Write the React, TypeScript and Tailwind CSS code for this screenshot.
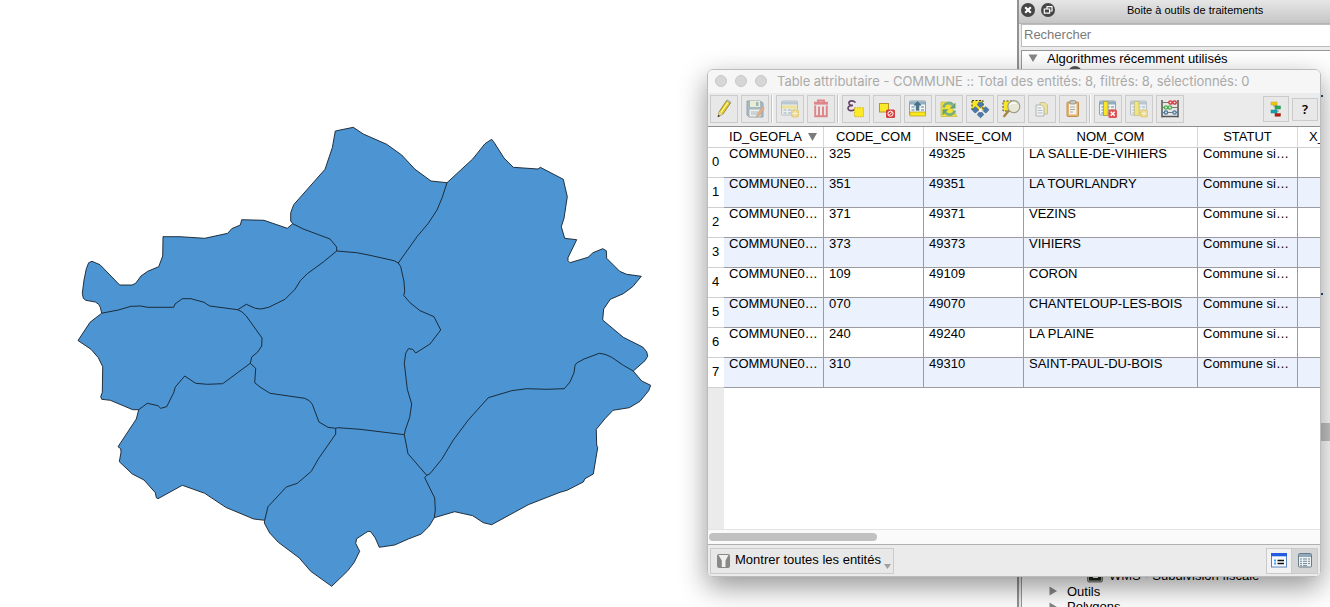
import React from "react";

const OUTLINE =
  "101.7,313.2 100.3,307.3 98.7,304.3 95.3,302 85.7,300.3 83.3,298.3 82.3,293.3 84,280 86.3,268.7 88.7,262.7 92,261.3 100,264.7 119.7,285 132,285 135.7,283.3 141,276 147.7,271.3 158.7,266.7 162.7,256 163,236.7 180,236.7 204.7,238.3 227.7,233.3 231.7,228.7 240.3,225 241.7,219.7 264,220.3 287.3,228.3 292.7,223.7 290.7,221 290.7,212.7 293.7,204.7 325,169.3 332.3,147.7 335.3,131 353.3,127.3 363.3,134 386.7,144.3 401.7,155 415,169.3 431,181 447,182.7 472.7,159 485,143.7 491.7,139.3 494.3,142.7 504,158 513.3,167.3 538,169 540.3,167.3 563.3,179.3 567.3,196.7 564,218.3 561.3,226.7 564.7,238.3 576.7,239.7 568,257.7 568,260.7 570,262.7 588,257.3 593,252.7 602.7,248.7 606.3,250.7 606.7,258.3 619.7,271.3 626.7,274.3 641.3,276.3 632.7,286.7 623.3,293.7 610.3,299.3 603.7,309 602.7,320 623.3,337.3 642.7,347 646.7,351.7 647.7,356.3 645,360.7 633.3,371 641.7,381 650.7,385.3 648.7,390.7 640,401.3 629.3,407.7 613,410.3 605,418.7 596.3,429.3 596.7,445 597.7,447.7 593.3,474 585,478.7 583.3,482 567,490.3 560,492.3 528.3,504.7 491.7,524.7 483.3,522.7 472.7,515.7 454.7,511.7 434.3,517.7 429.3,526 421.3,534 408.3,539 394.7,545 379.3,547.3 375.3,538 370.7,531.7 368,531.3 356.7,538.7 355.7,543.3 359.7,551.3 354,562.7 347.3,571.3 331.7,586.3 310.7,571.3 299.3,558 278.3,542.3 269.7,533 264.3,523 264.7,520.3 253.7,519 225.7,507.3 204.7,493.3 182.3,485.3 158,498.7 156.3,497.7 155.3,492.7 144,480 132.3,474 119.3,461.7 121,452.3 120.7,448.7 118,446.7 136.3,419 138.7,409.7 132.7,409.7 110.3,400.3 101.7,399.3 100.7,396.7 102.3,392.3 102.7,366.7 98.3,357.7 91,349.3 78,340.5 90,322.3";

const BORDERS = [
  "101.7,313.2 118.3,310 131,306.3 140.7,306 147.7,307.3 173.7,307.3 175,304 182.3,298.7 191,298.7 204,302.3 209.7,306 237.7,309.7 246.3,304.3 255.3,308.3 261,309 268.7,307.3 285,299.3 295,289.3 300.3,280.7 307.3,273.7 323.3,262 336.7,251",
  "292.7,223.7 303.3,229 330,239 336.7,247 336.7,251 356.7,252.7 370,255.3 394,260.7 398.3,263",
  "447,182.7 442.3,197.3 437,210 428.3,223.3 417.3,236.3 398.3,263 400.7,266.7 404,281.7 404.7,291.7 403.7,295.3 410,302.7 420,310.7 434,316.7 440.7,330 430,344 415.7,353 412.7,349.3 408.3,348.7 405.7,353.3 404.3,363.3 407.3,389.3 411.7,404 409.7,417.3 405.3,430 404.3,434.7 408,453.7 426.7,475.3",
  "633.3,371 623.3,365.3 611.7,357.3 605,354.3 599.3,353.3 584,359 576.7,363 575,365.3 574,372.7 570,382 564.3,388.7 546.7,389.3 526.7,388.7 511.7,390.7 488.3,397.7 468.3,420 453.3,440 441.7,459.3 430,473.7 426.7,475.3 424.7,477.7 434.7,498 435.3,510 434.3,517.7",
  "404.3,434.7 360,429.3 337.7,427.7 335.7,428.3 328,427.3 319,422 312.3,404.3 309.3,400.7 304.7,398.3 270,393.3 260,387 254.7,382.7 255.7,368.3 250.3,363.3 251.7,357 257.7,352 261.7,346 262,338 246.3,316 241.7,311.7 237.7,309.7",
  "250.3,363.3 222.7,383.7 207.3,384.3 195.7,383.3 184.7,376 175.3,387 173.7,392.7 166.7,406.7 160.7,408.3 158,405.7 147.3,403.3 138.7,409.7",
  "335.7,428.3 335.7,434 318.3,459 311.3,471.3 297.3,483.3 286.3,487 268,506.7 264.7,520.3",
];

function MapCanvas() {
  return (
    <svg width="1017" height="607" viewBox="0 0 1017 607" className="block h-[607px] w-[1017px] shrink-0 bg-white">
      <g stroke="#14202b" strokeWidth="0.9" strokeLinejoin="round" fill="none">
        <polygon points={OUTLINE} fill="#4c94d2" />
        {BORDERS.map((p) => (
          <polyline key={p} points={p} />
        ))}
      </g>
    </svg>
  );
}

function Triangle({ down = false }: { down?: boolean }) {
  return (
    <svg width="10" height="10" viewBox="0 0 10 10" className="shrink-0">
      <path d={down ? "M0.5 1.5H9.5L5 9Z" : "M1.5 0.5V9.5L9 5Z"} fill="#868686" />
    </svg>
  );
}

function ToolboxPanel() {
  return (
    <div className="flex min-w-0 flex-1 flex-col border-l-2 border-[#929292] bg-[#ececec]">
      <div className="flex h-6 shrink-0 items-center border-b border-[#b4b4b4] bg-linear-to-b from-[#e6e6e6] to-[#c6c6c6] pb-[3px] pl-[2px]">
        <svg width="34" height="14" viewBox="0 0 34 14" className="shrink-0">
          <circle cx="7" cy="7" r="7" fill="#464646" />
          <path d="M4.2 4.2L9.8 9.8M9.8 4.2L4.2 9.8" stroke="#fff" strokeWidth="2.2" />
          <circle cx="27" cy="7" r="7" fill="#464646" />
          <path d="M26 5.5V3.6H31V8H29.3M23.3 6H28.6V10.2H23.3Z" stroke="#fff" strokeWidth="1.2" fill="none" />
        </svg>
        <span className="ml-[72px] whitespace-nowrap pt-px text-[11px] leading-none tracking-[0.02px]">Boite à outils de traitements</span>
      </div>
      <div className="ml-[2px] flex h-[23px] shrink-0 items-center border border-r-0 border-[#bdbdbd] bg-white pb-[2px] pl-[2px] text-[13px] leading-none text-[#7b7b7b]">
        Rechercher
      </div>
      <div className="relative ml-[2px] mt-[3px] flex min-h-0 flex-1 flex-col overflow-hidden border-l border-t border-[#979797] bg-white text-[13px] leading-none">
        <div className="flex h-[14px] shrink-0 items-center gap-[9px] pl-[6px]">
          <Triangle down />
          <span className="whitespace-nowrap">Algorithmes récemment utilisés</span>
        </div>
        <div className="flex h-4 shrink-0 items-center pl-[46px]">
          <span className="mr-2 h-[14px] w-[14px] rounded-full bg-[#555]" />
          <span>Ville</span>
        </div>
        <div className="h-[486px] shrink-0" />
        <div className="flex h-4 shrink-0 items-center pl-[65px]">
          <svg width="16" height="16" viewBox="0 0 16 16" className="mr-[6px] shrink-0">
            <rect x="0.5" y="0.5" width="15" height="14.5" rx="1.5" fill="#a7a7a7" stroke="#777" />
            <rect x="2" y="2" width="12" height="11.5" fill="#1c2818" />
            <path d="M6 10.5h5" stroke="#fff" />
          </svg>
          <span className="whitespace-nowrap">WMS - Subdivision fiscale</span>
        </div>
        <div className="flex h-4 shrink-0 items-center gap-[9px] pl-[26px]">
          <Triangle />
          <span>Outils</span>
        </div>
        <div className="flex h-[15px] shrink-0 items-center gap-[9px] pl-[26px]">
          <Triangle />
          <span>Polygons</span>
        </div>
        <div className="absolute right-0 top-[372px] h-[18px] w-[10px] bg-[#c6c6c6]" />
        <div className="absolute right-[7px] top-[44px] h-[2px] w-[2px] bg-[#1d4f80]" />
        <div className="absolute right-[7px] top-[242px] h-[2px] w-[2px] bg-[#1d4f80]" />
      </div>
    </div>
  );
}

const Icon = ({ children, dim = false }: { children: React.ReactNode; dim?: boolean }) => (
  <svg width="20" height="20" viewBox="0 0 20 20" className={dim ? "block opacity-55" : "block"}>
    {children}
  </svg>
);

const Sheet = () => (
  <>
    <rect x="1.5" y="2" width="16" height="14" rx="1" fill="#f1f5f6" stroke="#8ea3b1" />
    <rect x="2" y="2.5" width="15" height="3" fill="#91adc1" />
    <path d="M3.5 8h3M8 8h3.5M13 8h3M3.5 11h3M8 11h3.5M13 11h3M3.5 14h3M8 14h3.5" stroke="#5f8093" strokeWidth="1.1" />
  </>
);

const Spark = () => (
  <>
    <rect x="11" y="10.5" width="8" height="8" rx="2" fill="#e3ba28" />
    <path d="M15 11.5v6M12 14.5h6M13 12.5l4 4M17 12.5l-4 4" stroke="#fff7b8" />
  </>
);

const PencilIcon = () => (
  <Icon>
    <path d="M4 17.5L5.3 12.5L12.7 1.5L16.5 4L9 15Z" fill="#e6cc25" stroke="#85782b" strokeWidth="0.8" />
    <path d="M6.9 13.5L14.3 2.8" stroke="#fff6a0" strokeWidth="1.3" />
    <path d="M12.3 2L13.2 0.9L17 3.2L16.3 4.4Z" fill="#c6c9bc" stroke="#8d8d78" strokeWidth="0.5" />
    <path d="M4 17.5L5.3 12.8L8.9 15Z" fill="#e5d7aa" />
    <path d="M3.6 18.2L4.3 15.7L6.2 16.9Z" fill="#333" />
  </Icon>
);

const SaveIcon = () => (
  <Icon dim>
    <path d="M2 2H15L18 4V18H4L2 16Z" fill="#7192a8" stroke="#517085" />
    <rect x="5" y="2" width="10" height="6" fill="#edf2c0" />
    <rect x="11" y="3" width="2.5" height="4" fill="#6c8899" />
    <rect x="4.5" y="10.5" width="11" height="7" fill="#f4f4ea" />
    <path d="M6 13h7M6 15h6" stroke="#75919f" />
    <path d="M11.5 18L12.4 15L17.3 7.8L19.3 9.2L14.3 16.5Z" fill="#e58b3e" stroke="#a65b29" strokeWidth="0.7" />
  </Icon>
);

const AddRowIcon = () => (
  <Icon dim>
    <Sheet />
    <rect x="2" y="6.5" width="15" height="3" fill="#f4dd58" />
    <Spark />
  </Icon>
);

const TrashIcon = () => (
  <Icon dim>
    <g fill="none" stroke="#d5353b" strokeWidth="1.9">
      <path d="M7 3V1.5H13V3" />
      <path d="M3 4.2H17" strokeWidth="2.8" />
      <path d="M4.2 6.5V17.3H15.8V6.5M8 7.5v9M12 7.5v9" />
    </g>
  </Icon>
);

const ExprIcon = () => (
  <Icon>
    <path d="M9.2 3.8C8.4 1.2 2.9 1.1 2.9 4.1C2.9 6.1 5.1 6.4 7 6.4C4.3 6.4 2 7.1 2 9.3C2 12.4 8 12.4 9.3 9.5" stroke="#65416c" strokeWidth="1.6" fill="none" />
    <rect x="8.5" y="8.7" width="9" height="9" fill="#fce927" stroke="#d2b51b" strokeDasharray="1.5 1" />
  </Icon>
);

const DeselectIcon = () => (
  <Icon>
    <rect x="2.5" y="4.5" width="9" height="8.5" fill="#fce927" stroke="#b8942d" />
    <rect x="9" y="10.5" width="9" height="8.5" rx="1.5" fill="#d83b40" />
    <circle cx="13.5" cy="14.7" r="2.6" fill="none" stroke="#fff" />
    <path d="M11.8 16.5L15.3 13" stroke="#fff" />
  </Icon>
);

const MoveTopIcon = () => (
  <Icon>
    <Sheet />
    <rect x="2" y="13" width="15.5" height="4" fill="#fbe71d" stroke="#b49c1d" strokeWidth="0.7" />
    <path d="M9.5 2.5L13 6.2H10.8V11H8.2V6.2H6Z" fill="#47758e" stroke="#31586b" strokeWidth="0.5" />
  </Icon>
);

const InvertIcon = () => (
  <Icon>
    <path d="M2 3H9L18 17.5H2Z" fill="#f5e32c" stroke="#c5b43f" strokeWidth="0.7" />
    <path d="M4.5 8.5C5.5 4 11 2.5 14 6" stroke="#7cae86" strokeWidth="2.8" fill="none" />
    <path d="M16.5 3.5V9.5H10.5Z" fill="#67a074" />
    <path d="M15.8 11.5C14.8 16 9 17 6.2 13.7" stroke="#7cae86" strokeWidth="2.8" fill="none" />
    <path d="M3.5 16.5V10.2H9.7Z" fill="#67a074" />
  </Icon>
);

const PanIcon = () => (
  <Icon>
    <rect x="2" y="1.5" width="11" height="9.5" fill="#f8e428" stroke="#39351b" strokeDasharray="2 1.5" />
    <g fill="#4c78ab" stroke="#35628e" strokeWidth="0.6">
      <path d="M10.5 8.8L7.3 5.8L8.8 3.2H12.2L13.7 5.8Z" />
      <path d="M10.5 18.8L7.3 15.8L8.8 13.6H12.2L13.7 15.8Z" />
      <path d="M2 10.8L5 7.7L7.3 9.2V12.5L5 14Z" />
      <path d="M19 10.8L16 7.7L13.7 9.2V12.5L16 14Z" />
    </g>
    <circle cx="10.5" cy="11" r="1.5" fill="#fff" />
  </Icon>
);

const ZoomIcon = () => (
  <Icon>
    <rect x="2" y="2" width="11" height="10" fill="#f8e428" stroke="#514b22" strokeDasharray="2 1.5" />
    <path d="M7.5 12L3.3 17" stroke="#a6853e" strokeWidth="2.4" strokeLinecap="round" />
    <circle cx="12.8" cy="7.6" r="6" fill="#e8e8d5" stroke="#9b9b8e" strokeWidth="1.2" />
    <path d="M9 6C10 3.7 13 3.3 15 4.5" stroke="#fff" strokeWidth="1.4" fill="none" />
  </Icon>
);

const CopyIcon = () => (
  <Icon dim>
    <path d="M8 3.5H13L15.5 6V15H8Z" fill="#f1df58" stroke="#aaa26b" />
    <path d="M4 6H9.5L12 8.5V17H4Z" fill="#fff" stroke="#838d8d" />
    <path d="M5.5 9h4M5.5 11.5h5M5.5 14h5" stroke="#82989c" />
  </Icon>
);

const PasteIcon = () => (
  <Icon>
    <rect x="4" y="3" width="11.5" height="14.5" rx="1" fill="#e4b46e" stroke="#c09050" />
    <rect x="6" y="5" width="7.5" height="10.5" fill="#f4f2ec" />
    <rect x="7" y="1.5" width="5.5" height="3.5" rx="1" fill="#c5c5c5" stroke="#8e8e8e" strokeWidth="0.8" />
    <path d="M7 8h5M7 10.5h5M7 13h3" stroke="#aaa" />
  </Icon>
);

const DeleteColIcon = () => (
  <Icon>
    <Sheet />
    <rect x="5.5" y="2.5" width="4.5" height="14" fill="#f8e52a" stroke="#a99833" strokeWidth="0.7" />
    <rect x="10.5" y="10.5" width="8.5" height="8.5" rx="1.5" fill="#df5055" />
    <path d="M12.7 12.7l4 4M16.7 12.7l-4 4" stroke="#fff" strokeWidth="1.5" />
  </Icon>
);

const AddColIcon = () => (
  <Icon dim>
    <Sheet />
    <rect x="5.5" y="2.5" width="4.5" height="14" fill="#f8e52a" stroke="#a99833" strokeWidth="0.7" />
    <Spark />
  </Icon>
);

const AbacusIcon = () => (
  <Icon>
    <path d="M2 1V18.5M18 1V18.5M1.5 17.5H18.5" stroke="#555" strokeWidth="1.5" />
    <path d="M2 3.5H18M2 8.5H18M2 13.5H18" stroke="#777" />
    <g fill="#f7d1d3" stroke="#cf3439" strokeWidth="1.3"><circle cx="10.5" cy="3.5" r="1.7" /><circle cx="14.5" cy="3.5" r="1.7" /></g>
    <g fill="#cdebc9" stroke="#54ad57" strokeWidth="1.3"><circle cx="6" cy="8.5" r="1.7" /><circle cx="10" cy="8.5" r="1.7" /></g>
    <g fill="#c8dceb" stroke="#49799f" strokeWidth="1.3"><circle cx="6" cy="13.5" r="1.7" /><circle cx="14.5" cy="13.5" r="1.7" /></g>
  </Icon>
);

const DockIcon = () => (
  <Icon>
    <path d="M10 6V15M7 7H12M8 12H13" stroke="#777" strokeWidth="0.8" />
    <rect x="5" y="3" width="6" height="3" fill="#f1c800" stroke="#bea31c" strokeWidth="0.5" />
    <rect x="9" y="7" width="5.5" height="3" fill="#1caf55" stroke="#298350" strokeWidth="0.5" />
    <rect x="5" y="11" width="6" height="3" fill="#13a5ae" stroke="#168188" strokeWidth="0.5" />
    <rect x="9" y="14.5" width="5.5" height="2.7" fill="#c01610" stroke="#831" strokeWidth="0.5" />
  </Icon>
);

const GROUPS = [
  [PencilIcon, SaveIcon],
  [AddRowIcon, TrashIcon],
  [ExprIcon, DeselectIcon, MoveTopIcon, InvertIcon, PanIcon, ZoomIcon, CopyIcon, PasteIcon],
  [DeleteColIcon, AddColIcon, AbacusIcon],
];

const BTN = "flex shrink-0 items-center justify-center border border-[#cbcbcb] bg-[#e8e8e8]";

function Toolbar() {
  return (
    <div className="flex h-[34px] shrink-0 items-center border-b border-[#8f8f8f] bg-[#ebebeb] pb-px pl-[2px] pr-[2px]">
      {GROUPS.map((group, g) => (
        <div key={g} className="flex items-center">
          <div className="flex gap-[3px]">
            {group.map((Glyph, i) => (
              <button key={i} className={`${BTN} h-7 w-7`}>
                <Glyph />
              </button>
            ))}
          </div>
          {g < 3 && <div className="ml-[2px] mr-[3px] h-7 w-[2px] border-l border-[#c2c2c2] bg-white" />}
        </div>
      ))}
      <div className="ml-auto flex items-center gap-[3px]">
        <button className={`${BTN} h-[26px] w-[26px]`}>
          <DockIcon />
        </button>
        <button className={`${BTN} h-[23px] w-[26px] font-['Noto_Sans',sans-serif] text-[13px] font-semibold leading-none`}>?</button>
      </div>
    </div>
  );
}

const ROWS = [
  ["325", "49325", "LA SALLE-DE-VIHIERS"],
  ["351", "49351", "LA TOURLANDRY"],
  ["371", "49371", "VEZINS"],
  ["373", "49373", "VIHIERS"],
  ["109", "49109", "CORON"],
  ["070", "49070", "CHANTELOUP-LES-BOIS"],
  ["240", "49240", "LA PLAINE"],
  ["310", "49310", "SAINT-PAUL-DU-BOIS"],
];

const GRID = "grid grid-cols-[16px_100px_100px_100px_174px_100px_22px]";
const CELL = "overflow-hidden whitespace-nowrap border-b border-r border-[#9b9ba1] pl-[5px] leading-[11px]";
const HEAD = "flex items-center justify-center border-r border-[#d8d8d8] pb-[2px]";

function AttributeTable() {
  return (
    <div className="flex min-h-0 flex-1 flex-col overflow-hidden bg-white text-[13px]">
      <div className={`${GRID} h-[21px] shrink-0 border-b border-[#d0d0d0] leading-none`}>
        <div />
        <div className={`${HEAD} gap-[6px] pr-px`}>
          ID_GEOFLA
          <svg width="9" height="8" viewBox="0 0 9 8" className="mt-[2px]">
            <path d="M0 0H9L4.5 8Z" fill="#7b7b7b" />
          </svg>
        </div>
        <div className={HEAD}>CODE_COM</div>
        <div className={HEAD}>INSEE_COM</div>
        <div className={HEAD}>NOM_COM</div>
        <div className={HEAD}>STATUT</div>
        <div className="flex items-center overflow-hidden pb-[2px] pl-[11px]">X_</div>
      </div>
      {ROWS.map(([code, insee, nom], i) => (
        <div key={code} className={`${GRID} h-[30px] shrink-0 ${i % 2 ? "bg-[#ebf2fe]" : "bg-white"}`}>
          <div className="border-b border-[#d0d0d0] bg-white pl-1 pt-[7px] leading-[13px]">{i}</div>
          <div className={CELL}>COMMUNE0…</div>
          <div className={CELL}>{code}</div>
          <div className={CELL}>{insee}</div>
          <div className={CELL}>{nom}</div>
          <div className={CELL}>Commune si…</div>
          <div className="border-b border-[#9b9ba1]" />
        </div>
      ))}
      <div className="flex-1 border-l-[16px] border-[#ebebeb]" />
      <div className="flex h-[15px] shrink-0 items-center border-t border-[#e4e4e4] bg-[#fafafa] pl-px">
        <div className="h-2 w-[168px] rounded-full bg-[#c1c1c1]" />
      </div>
    </div>
  );
}

function StatusBar() {
  return (
    <div className="flex h-8 shrink-0 items-center border-t border-[#b0b0b0] bg-[#ebebeb] pl-[2px] pr-[2px]">
      <button className={`${BTN} h-[26px] w-[184px] justify-start! pl-[6px] text-[13px] leading-none`}>
        <svg width="13" height="14" viewBox="0 0 13 14" className="shrink-0">
          <rect width="13" height="14" rx="2" fill="#898985" />
          <path d="M1.5 1H11.5L8.5 6.5V13H4.8V6.5Z" fill="#f1f1f1" />
        </svg>
        <span className="ml-[5px] whitespace-nowrap pb-[2px]">Montrer toutes les entités</span>
        <svg width="7" height="5" viewBox="0 0 7 5" className="ml-[3px] mt-[11px] shrink-0">
          <path d="M0 0H7L3.5 5Z" fill="#a0a0a0" />
        </svg>
      </button>
      <div className="ml-auto flex">
        <button className={`${BTN} h-[26px] w-[26px] bg-[#f2f2f2]!`}>
          <svg width="16" height="15" viewBox="0 0 16 15">
            <rect x="0.5" y="0.5" width="15" height="13.5" fill="#f7fbff" stroke="#5c80bf" />
            <rect width="16" height="3.3" fill="#245de0" />
            <path d="M3 7.5h2M3 10.5h2" stroke="#429ef2" strokeWidth="2" />
            <path d="M6.5 7.5h6.5M6.5 10.5h6.5" stroke="#111" strokeWidth="1.5" />
          </svg>
        </button>
        <button className={`${BTN} h-[26px] w-[26px] border-l-0 bg-[#d5d5d5]!`}>
          <svg width="14" height="15" viewBox="0 0 14 15">
            <rect x="0.5" y="0.5" width="13" height="13.5" rx="1" fill="#eef2f4" stroke="#657c8b" />
            <rect x="1" y="1" width="12" height="3" fill="#91a9b9" />
            <path d="M2 6h2M5 6h4M10 6h2M2 8.3h2M5 8.3h4M10 8.3h2M2 10.6h2M5 10.6h4M10 10.6h2M2 12.7h2M5 12.7h4" stroke="#708590" />
          </svg>
        </button>
      </div>
    </div>
  );
}

function AttributeWindow() {
  return (
    <div className="absolute left-[707px] top-[69px] flex h-[508px] w-[614px] flex-col overflow-hidden rounded-md border border-[#bcbcbc] shadow-[0_10px_28px_rgba(0,0,0,0.42)]">
      <div className="flex h-[23px] shrink-0 items-center bg-[#f6f6f6] pb-px pl-[7px]">
        <div className="flex gap-2">
          <span className="h-3 w-3 rounded-full border border-[#c8c8c8] bg-[#d6d6d6]" />
          <span className="h-3 w-3 rounded-full border border-[#c8c8c8] bg-[#d6d6d6]" />
          <span className="h-3 w-3 rounded-full border border-[#c8c8c8] bg-[#d6d6d6]" />
        </div>
        <span className="ml-[10px] whitespace-nowrap font-['Inter',sans-serif] text-[13px] leading-none tracking-[-0.04px] text-[#aaaaaa]">
          Table attributaire - COMMUNE :: Total des entités: 8, filtrés: 8, sélectionnés: 0
        </span>
      </div>
      <Toolbar />
      <AttributeTable />
      <StatusBar />
    </div>
  );
}

export default function App() {
  return (
    <div className="relative flex h-[607px] w-[1330px] overflow-hidden bg-white font-['Liberation_Sans',Arial,sans-serif] text-black">
      <MapCanvas />
      <ToolboxPanel />
      <AttributeWindow />
    </div>
  );
}
